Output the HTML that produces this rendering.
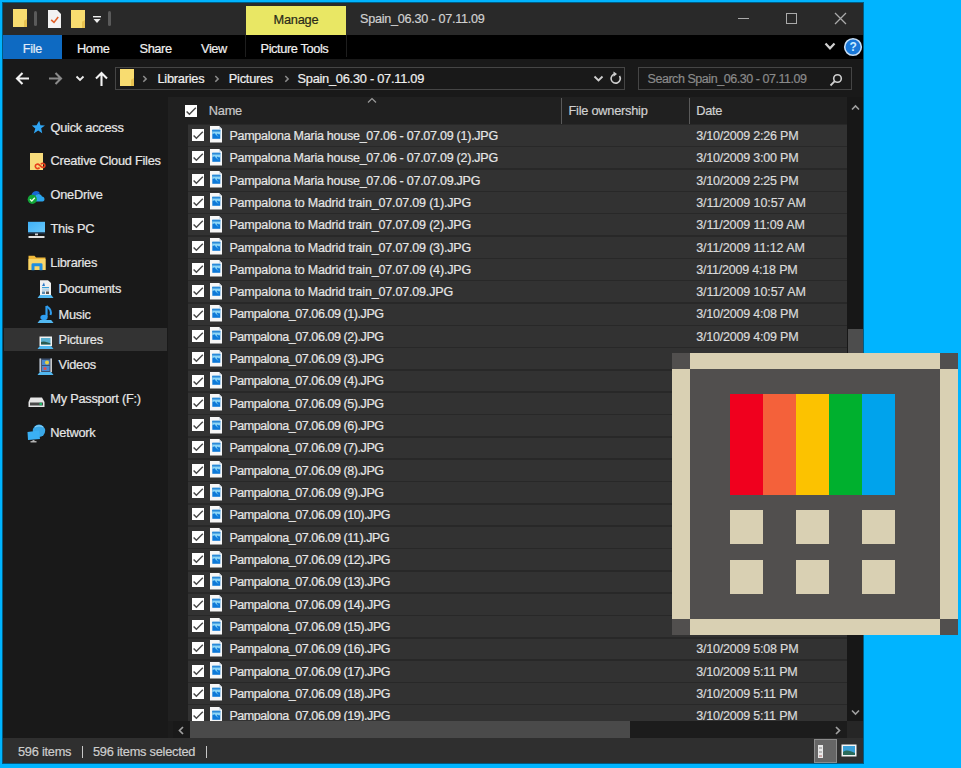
<!DOCTYPE html><html><head><meta charset='utf-8'><style>html,body{margin:0;padding:0;}
body{width:961px;height:768px;background:#00B4FF;position:relative;overflow:hidden;font-family:"Liberation Sans",sans-serif;font-size:12.5px;letter-spacing:-0.25px;color:#e3e3e3;-webkit-text-stroke:0.2px;}
.a{position:absolute;}
.t{position:absolute;white-space:pre;line-height:1;}
.win{left:3px;top:3px;width:860px;height:760px;background:#191919;box-shadow:0 0 0 1px rgba(0,20,30,0.55);}
.title{left:3px;top:3px;width:860px;height:32px;background:#292929;}
.tabs{left:3px;top:35px;width:860px;height:24px;background:#000;}
.addr{left:3px;top:59px;width:860px;height:38px;background:#191919;}
.nav{left:3px;top:97px;width:165px;height:641px;background:#191919;}
.content{left:168px;top:97px;width:695px;height:641px;background:#202020;}
.status{left:3px;top:738px;width:860px;height:25px;background:#2f2f2f;}
.rows{position:absolute;left:0;top:97px;width:847px;height:624px;overflow:hidden;}
.row{position:absolute;left:188px;width:659px;height:20.8px;background:#323232;}
.row .cb{position:absolute;left:4px;top:3.4px;width:12px;height:12px;background:#fff;}
.cb::after{content:"";position:absolute;left:2.2px;top:2.2px;width:7px;height:3.6px;border-left:2px solid #3a3a3a;border-bottom:2px solid #3a3a3a;transform:rotate(-45deg);transform-origin:center;}
.row .cb::after{left:2.0px;top:2.4px;}
.fi{position:absolute;left:21.5px;top:0.7px;width:12.5px;height:17px;background:#f4f4f4;clip-path:polygon(0 0,75% 0,100% 18%,100% 100%,0 100%);}
.fi::after{content:"";position:absolute;left:2.2px;top:4.2px;width:8.3px;height:8.5px;background:linear-gradient(#5ab8f4 0,#5ab8f4 30%,#0d78d6 30%,#0b6fcf 100%);}
.nm{position:absolute;left:41.4px;top:4.75px;white-space:pre;line-height:1;color:#e6e6e6;}
.dt{position:absolute;left:508.2px;top:4.75px;white-space:pre;line-height:1;color:#dadada;}
.nvt{position:absolute;white-space:pre;line-height:1;color:#e8e8e8;font-size:12.8px;}
.cb2{position:absolute;left:4.2px;top:3.85px;}
.fi2{position:absolute;left:21.5px;top:1.35px;}
</style></head><body><div class='a win'></div>
<div class='a title'></div>
<div class='a tabs'></div>
<div class='a addr'></div>
<div class='a nav'></div>
<div class='a content'></div>
<div class='a status'></div>
<div class='a' style='left:13px;top:9px;width:14px;height:18px;background:#f8dc70;clip-path:polygon(0 0,100% 0,100% 100%,0 100%)'></div><div class='a' style='left:23.5px;top:19px;width:3.5px;height:8px;background:#e8c250;clip-path:polygon(100% 0,100% 100%,0 100%,0 25%)'></div>
<div class='a' style='left:34px;top:11px;width:3px;height:15px;background:#5a5a5a;border-radius:1.5px'></div>
<div class='a' style='left:48px;top:10px;width:13px;height:18px;background:#f2f2f2;clip-path:polygon(0 0,70% 0,100% 22%,100% 100%,0 100%)'></div>
<svg class='a' style='left:48px;top:10px' width='13' height='18'><path d='M3.2 9.8 L6 12.4 L10.2 7' stroke='#e0602a' stroke-width='1.6' fill='none'/></svg>
<div class='a' style='left:71px;top:10px;width:14px;height:18px;background:#f8dc70;clip-path:polygon(0 0,100% 0,100% 100%,0 100%)'></div><div class='a' style='left:81.5px;top:20px;width:3.5px;height:8px;background:#e8c250;clip-path:polygon(100% 0,100% 100%,0 100%,0 25%)'></div>
<svg class='a' style='left:92px;top:15px' width='10' height='10'><rect x='1' y='1' width='8' height='1.4' fill='#eee'/><path d='M1.5 4 L8.5 4 L5 8 Z' fill='#eee'/></svg>
<div class='a' style='left:108px;top:11px;width:3px;height:15px;background:#5a5a5a;border-radius:1.5px'></div>
<div class='a' style='left:246px;top:6px;width:100px;height:29px;background:#E9E764;'></div>
<div class='t' style='left:273.50px;top:14.46px;font-size:12.8px;color:#2a2a1a;'>Manage</div>
<div class='t' style='left:360.00px;top:13.13px;font-size:12.6px;color:#d0d0d0;'>Spain_06.30 - 07.11.09</div>
<div class='a' style='left:738px;top:18px;width:11px;height:1.2px;background:#aaaaaa;'></div>
<div class='a' style='left:786px;top:13px;width:9px;height:9px;border:1.2px solid #aaaaaa'></div>
<svg class='a' style='left:834px;top:12px' width='13' height='13'><path d='M1 1 L12 12 M12 1 L1 12' stroke='#aaaaaa' stroke-width='1.3'/></svg>
<div class='a' style='left:3px;top:35px;width:59px;height:24px;background:#0e6ac2;'></div>
<div class='t' style='left:22.80px;top:42.72px;color:#e2ecf8;'>File</div>
<div class='t' style='left:77.00px;top:42.56px;font-size:12.8px;color:#f0f0f0;letter-spacing:-0.4px'>Home</div>
<div class='t' style='left:139.50px;top:42.56px;font-size:12.8px;color:#f0f0f0;letter-spacing:-0.4px'>Share</div>
<div class='t' style='left:201.00px;top:42.56px;font-size:12.8px;color:#f0f0f0;letter-spacing:-0.4px'>View</div>
<div class='a' style='left:245px;top:35px;width:1px;height:22px;background:#1e1e1e;'></div>
<div class='a' style='left:346px;top:35px;width:1px;height:22px;background:#1e1e1e;'></div>
<div class='t' style='left:260.50px;top:42.56px;font-size:12.8px;color:#f0f0f0;letter-spacing:-0.4px'>Picture Tools</div>
<svg class='a' style='left:824px;top:42px' width='12' height='9'><path d='M1.5 1.5 L6 6.3 L10.5 1.5' stroke='#d0d0d0' stroke-width='2.2' fill='none'/></svg>
<svg class='a' style='left:843px;top:37px' width='20' height='20'><circle cx='10' cy='10' r='8.3' fill='#1877d8' stroke='#c4dcf4' stroke-width='1.6'/><text x='10' y='14.3' font-family='Liberation Sans' font-size='12' font-weight='bold' fill='#c8ecff' text-anchor='middle'>?</text></svg>
<svg class='a' style='left:15px;top:71px' width='16' height='15'><path d='M14 7.5 L2 7.5 M7.5 2 L2 7.5 L7.5 13' stroke='#f2f2f2' stroke-width='2.1' fill='none'/></svg>
<svg class='a' style='left:47px;top:71px' width='16' height='15'><path d='M2 7.5 L14 7.5 M8.5 2 L14 7.5 L8.5 13' stroke='#8a8a8a' stroke-width='2.1' fill='none'/></svg>
<svg class='a' style='left:75px;top:75px' width='10' height='7'><path d='M1.5 1.5 L5 5 L8.5 1.5' stroke='#eeeeee' stroke-width='1.8' fill='none'/></svg>
<svg class='a' style='left:94px;top:71px' width='15' height='16'><path d='M7.5 15 L7.5 2 M2 7.5 L7.5 2 L13 7.5' stroke='#f2f2f2' stroke-width='2.1' fill='none'/></svg>
<div class='a' style='left:115px;top:67px;width:508px;height:21px;border:1px solid #454545'></div>
<div class='a' style='left:120px;top:69px;width:14px;height:17px;background:#f8dc70;clip-path:polygon(0 0,100% 0,100% 100%,0 100%)'></div><div class='a' style='left:130.5px;top:78px;width:3.5px;height:8px;background:#e8c250;clip-path:polygon(100% 0,100% 100%,0 100%,0 25%)'></div>
<svg class='a' style='left:141px;top:73px' width='8' height='10'><path d='M2.3 3 L5.2 5.9 L2.3 8.8' stroke='#8c8c8c' stroke-width='1.5' fill='none'/></svg>
<div class='t' style='left:157.50px;top:72.66px;font-size:12.8px;color:#efefef;'>Libraries</div>
<svg class='a' style='left:213px;top:73px' width='8' height='10'><path d='M2.3 3 L5.2 5.9 L2.3 8.8' stroke='#8c8c8c' stroke-width='1.5' fill='none'/></svg>
<div class='t' style='left:228.80px;top:72.66px;font-size:12.8px;color:#efefef;'>Pictures</div>
<svg class='a' style='left:283px;top:73px' width='8' height='10'><path d='M2.3 3 L5.2 5.9 L2.3 8.8' stroke='#8c8c8c' stroke-width='1.5' fill='none'/></svg>
<div class='t' style='left:297.50px;top:72.66px;font-size:12.8px;color:#efefef;'>Spain_06.30 - 07.11.09</div>
<svg class='a' style='left:593px;top:75px' width='11' height='8'><path d='M1.5 1.5 L5.5 5.5 L9.5 1.5' stroke='#cfcfcf' stroke-width='1.8' fill='none'/></svg>
<svg class='a' style='left:609px;top:71px' width='14' height='15'><path d='M10.5 5 A4.6 4.6 0 1 1 6 3' stroke='#cfcfcf' stroke-width='1.6' fill='none'/><path d='M4.5 0.5 L8 3 L4.5 5.8 Z' fill='#cfcfcf'/></svg>
<div class='a' style='left:638px;top:67px;width:212px;height:21px;border:1px solid #454545'></div>
<div class='t' style='left:647.50px;top:72.92px;color:#8a8a8a;letter-spacing:-0.45px'>Search Spain_06.30 - 07.11.09</div>
<svg class='a' style='left:829px;top:73px' width='14' height='14'><circle cx='8.5' cy='5.5' r='3.8' stroke='#cfcfcf' stroke-width='1.6' fill='none'/><path d='M5.8 8.2 L1.5 12.5' stroke='#cfcfcf' stroke-width='1.8'/></svg>
<div class='a' style='left:4px;top:328px;width:163px;height:23px;background:#333333;'></div>
<div class='t' style='left:50.50px;top:121.96px;font-size:12.8px;color:#e6e6e6;'>Quick access</div>
<div class='t' style='left:50.50px;top:154.66px;font-size:12.8px;color:#e6e6e6;'>Creative Cloud Files</div>
<div class='t' style='left:50.50px;top:189.16px;font-size:12.8px;color:#e6e6e6;'>OneDrive</div>
<div class='t' style='left:50.50px;top:223.06px;font-size:12.8px;color:#e6e6e6;'>This PC</div>
<div class='t' style='left:50.30px;top:257.36px;font-size:12.8px;color:#e6e6e6;'>Libraries</div>
<div class='t' style='left:58.60px;top:283.36px;font-size:12.8px;color:#e6e6e6;'>Documents</div>
<div class='t' style='left:58.60px;top:308.56px;font-size:12.8px;color:#e6e6e6;'>Music</div>
<div class='t' style='left:58.60px;top:334.16px;font-size:12.8px;color:#e6e6e6;'>Pictures</div>
<div class='t' style='left:58.60px;top:359.46px;font-size:12.8px;color:#e6e6e6;'>Videos</div>
<div class='t' style='left:50.30px;top:392.76px;font-size:12.8px;color:#e6e6e6;'>My Passport (F:)</div>
<div class='t' style='left:50.30px;top:426.66px;font-size:12.8px;color:#e6e6e6;'>Network</div>
<svg class='a' style='left:31px;top:120px' width='15' height='15'><path d='M8.2 0.8 L9.4 5.2 L14 5.6 L10.2 8.3 L11.2 13.2 L7.2 10.4 L2.8 13.4 L4.3 8.6 L0.8 5.6 L5.6 5.2 Z' fill='#2fa5f3'/></svg>
<div class='a' style='left:30px;top:153px;width:13px;height:17px;background:#f8dc7c'></div>
<svg class='a' style='left:33.5px;top:160.5px' width='12' height='9' viewBox='0 0 14 10'><path d='M6.5 7.5 C4.5 9.5,1.5 8.5,1.5 6 C1.5 3.5,4.5 2.5,6.5 4.5 L8 6 C10 8,12.8 7.5,12.8 5 C12.8 2.5,10 1.5,8 3.5' stroke='#e8401c' stroke-width='1.9' fill='none'/></svg>
<svg class='a' style='left:27px;top:188px' width='19' height='16'><path d='M4.5 12 C1.5 12,1 7.5,4.5 7 C5.5 2.5,11.5 1.5,13 5.5 C13 5.5,8 6,7.5 10 Z' fill='#1767d2'/><path d='M7 13.5 C4.5 13.5,4.5 9.5,7.5 9.5 C8.5 5,14 5,15 8.5 C18 8.5,18.5 13.5,15.5 13.5 Z' fill='#2aa4ec'/><circle cx='5.3' cy='11.3' r='4.6' fill='#13a538'/><path d='M3 11.3 L4.8 13 L7.8 9.8' stroke='#e8ffe8' stroke-width='1.3' fill='none'/></svg>
<svg class='a' style='left:28px;top:221px' width='18' height='18'><defs><linearGradient id='scr' x1='0' y1='0' x2='1' y2='1'><stop offset='0' stop-color='#3fb0f6'/><stop offset='1' stop-color='#68c8fa'/></linearGradient></defs><rect x='0' y='0.8' width='17' height='10.7' fill='url(#scr)'/><rect x='0' y='11.5' width='17' height='1.2' fill='#1a3a5a'/><rect x='7' y='12.5' width='3' height='1.8' fill='#cfcfcf'/><rect x='0.5' y='15' width='16' height='2' fill='#e0e0e0'/></svg>
<svg class='a' style='left:27.5px;top:255px' width='18' height='16'><path d='M0.5 0.8 L6.5 0.8 L8 2.5 L17.5 2.5 L17.5 15 L0.5 15 Z' fill='#f0b93a'/><rect x='0.5' y='4' width='17' height='11' fill='#f8d66a'/><path d='M3.5 15.2 L3.5 9.5 Q3.5 8.2 5 8.2 L13 8.2 Q14.5 8.2 14.5 9.5 L14.5 15.2 L11.5 15.2 L11.5 11.2 L6.5 11.2 L6.5 15.2 Z' fill='#1f8ee0'/></svg>
<svg class='a' style='left:36.5px;top:280px' width='17' height='19'><path d='M3 0.3 L11 0.3 L14 3 L14 15 L3 15 Z' fill='#f0f0f0'/><path d='M5 6 L7 2.5 L8 6 Z' fill='#2a78c8'/><rect x='5' y='7' width='7' height='1.2' fill='#3aa0d8'/><rect x='5' y='9.5' width='7' height='1' fill='#8ab8d8'/><rect x='5' y='11.5' width='3' height='2.5' fill='#5a8ab0'/><rect x='9' y='11.5' width='3' height='2.5' fill='#555'/><path d='M0.5 18 L2.8 15 L14.2 15 L16.5 18 Z' fill='#52b8f0'/></svg>
<svg class='a' style='left:36.5px;top:305px' width='17' height='19'><path d='M9.5 1 L9.5 12' stroke='#2f9ef0' stroke-width='2.2'/><path d='M9.5 1 C13 3.5,15 6,13.5 10' stroke='#2f9ef0' stroke-width='2' fill='none'/><ellipse cx='7' cy='12.5' rx='3.6' ry='2.8' fill='#2f9ef0'/><path d='M0.5 18 L2.8 15 L14.2 15 L16.5 18 Z' fill='#52b8f0'/></svg>
<svg class='a' style='left:36.5px;top:336px' width='17' height='14'><rect x='2.5' y='0.5' width='12.5' height='9.5' fill='#f2f2f2'/><rect x='4' y='2' width='9.5' height='6.5' fill='#5ab0d0'/><path d='M4 6 C7 4.5,10 6,13.5 7.5 L13.5 8.5 L4 8.5 Z' fill='#2a5a50'/><path d='M0.5 13 L2.8 10 L14.2 10 L16.5 13 Z' fill='#52b8f0'/></svg>
<svg class='a' style='left:36.5px;top:357.5px' width='17' height='17'><rect x='2.5' y='0.5' width='12.5' height='13.5' fill='#3a5070'/><rect x='2.5' y='0.5' width='1.6' height='13.5' fill='#c8c8c8'/><rect x='13.4' y='0.5' width='1.6' height='13.5' fill='#c8c8c8'/><rect x='5' y='2' width='7.5' height='5' fill='#4a8ad0'/><rect x='5' y='8' width='7.5' height='5' fill='#4a8ad0'/><circle cx='10' cy='4.5' r='2' fill='#e8d040'/><circle cx='8' cy='10.5' r='1.6' fill='#e05050'/><path d='M0.5 17 L2.8 14 L14.2 14 L16.5 17 Z' fill='#52b8f0'/></svg>
<svg class='a' style='left:28px;top:397px' width='17' height='11'><path d='M2.5 0.5 L14 0.5 L16.5 5 L16.5 10 L0.5 10 L0.5 5 Z' fill='#e6e6e6'/><rect x='2' y='5.5' width='13' height='3' fill='#4a4a4a'/><rect x='11.5' y='5.8' width='2.5' height='2.4' fill='#1fb86a'/></svg>
<svg class='a' style='left:27px;top:424px' width='19' height='19'><circle cx='12' cy='6.8' r='6.2' fill='#3aa8e8'/><path d='M8 3 C10 1.5,14 1.5,16 3' stroke='#9ad8fa' stroke-width='1' fill='none'/><path d='M0.5 8 L12 6.5 L13 15 L1 16 Z' fill='#3ab0f4'/><rect x='5.5' y='16' width='2' height='1.5' fill='#aaa'/><rect x='3.5' y='17.2' width='6' height='1.2' fill='#cfcfcf'/></svg>
<div class='a' style='left:168px;top:97px;width:679px;height:28px;background:#202020;'></div>
<svg class='a' style='left:185px;top:105px' width='12' height='12'><use href='#ck'/></svg>
<div class='t' style='left:208.80px;top:105.16px;font-size:12.8px;color:#c8c8c8;'>Name</div>
<svg class='a' style='left:367px;top:97px' width='10' height='7'><path d='M1 5.5 L5 1.5 L9 5.5' stroke='#9a9a9a' stroke-width='1.2' fill='none'/></svg>
<div class='a' style='left:561px;top:98px;width:1px;height:26px;background:#5a5a5a;'></div>
<div class='t' style='left:568.50px;top:105.16px;font-size:12.8px;color:#d0d0d0;'>File ownership</div>
<div class='a' style='left:689px;top:98px;width:1px;height:26px;background:#5a5a5a;'></div>
<div class='t' style='left:696.20px;top:105.16px;font-size:12.8px;color:#d0d0d0;'>Date</div>
<svg width='0' height='0' style='position:absolute'><defs><symbol id='ck' viewBox='0 0 12 12'><rect width='12' height='12' fill='#fff'/><path d='M1.6 6.4 L4.4 9.2 L10.8 2.8' stroke='#484848' stroke-width='1.45' fill='none'/></symbol><symbol id='pic' viewBox='0 0 13 17'><path d='M0 0 L9 0 L12 3 L12 16.4 L0 16.4 Z' fill='#f6f6f6'/><path d='M9 0 L9 3 L12 3' fill='#d8e0ea'/><rect x='2.3' y='3.8' width='8' height='9' fill='#0e79d8'/><rect x='2.3' y='3.8' width='8' height='1.6' fill='#2a8ad8'/><path d='M2.3 5.4 L10.3 5.4 L10.3 8 L9 8.6 L7.5 7.6 L6.6 9.6 L4.5 7.2 L2.3 8.2 Z' fill='#8fd6f6'/><path d='M5.5 7.5 L8 10.5' stroke='#6cc8f4' stroke-width='0.8'/></symbol></defs></svg>
<div class='a' style='left:188px;top:124px;width:659px;height:597px;background:#282828;'></div>
<div class='rows'>
<div class='row' style='top:28.15px'><svg class='cb2' width='12' height='12'><use href='#ck'/></svg><svg class='fi2' width='13' height='17'><use href='#pic'/></svg><span class='nm' style='letter-spacing:-0.25px'>Pampalona Maria house_07.06 - 07.07.09 (1).JPG</span><span class='dt' style='letter-spacing:-0.2px'>3/10/2009 2:26 PM</span></div>
<div class='row' style='top:50.47px'><svg class='cb2' width='12' height='12'><use href='#ck'/></svg><svg class='fi2' width='13' height='17'><use href='#pic'/></svg><span class='nm' style='letter-spacing:-0.25px'>Pampalona Maria house_07.06 - 07.07.09 (2).JPG</span><span class='dt' style='letter-spacing:-0.2px'>3/10/2009 3:00 PM</span></div>
<div class='row' style='top:72.79px'><svg class='cb2' width='12' height='12'><use href='#ck'/></svg><svg class='fi2' width='13' height='17'><use href='#pic'/></svg><span class='nm' style='letter-spacing:-0.25px'>Pampalona Maria house_07.06 - 07.07.09.JPG</span><span class='dt' style='letter-spacing:-0.2px'>3/10/2009 2:25 PM</span></div>
<div class='row' style='top:95.11px'><svg class='cb2' width='12' height='12'><use href='#ck'/></svg><svg class='fi2' width='13' height='17'><use href='#pic'/></svg><span class='nm' style='letter-spacing:-0.17px'>Pampalona to Madrid train_07.07.09 (1).JPG</span><span class='dt' style='letter-spacing:-0.08px'>3/11/2009 10:57 AM</span></div>
<div class='row' style='top:117.43px'><svg class='cb2' width='12' height='12'><use href='#ck'/></svg><svg class='fi2' width='13' height='17'><use href='#pic'/></svg><span class='nm' style='letter-spacing:-0.17px'>Pampalona to Madrid train_07.07.09 (2).JPG</span><span class='dt' style='letter-spacing:-0.08px'>3/11/2009 11:09 AM</span></div>
<div class='row' style='top:139.75px'><svg class='cb2' width='12' height='12'><use href='#ck'/></svg><svg class='fi2' width='13' height='17'><use href='#pic'/></svg><span class='nm' style='letter-spacing:-0.17px'>Pampalona to Madrid train_07.07.09 (3).JPG</span><span class='dt' style='letter-spacing:-0.08px'>3/11/2009 11:12 AM</span></div>
<div class='row' style='top:162.07px'><svg class='cb2' width='12' height='12'><use href='#ck'/></svg><svg class='fi2' width='13' height='17'><use href='#pic'/></svg><span class='nm' style='letter-spacing:-0.17px'>Pampalona to Madrid train_07.07.09 (4).JPG</span><span class='dt' style='letter-spacing:-0.2px'>3/11/2009 4:18 PM</span></div>
<div class='row' style='top:184.39px'><svg class='cb2' width='12' height='12'><use href='#ck'/></svg><svg class='fi2' width='13' height='17'><use href='#pic'/></svg><span class='nm' style='letter-spacing:-0.17px'>Pampalona to Madrid train_07.07.09.JPG</span><span class='dt' style='letter-spacing:-0.08px'>3/11/2009 10:57 AM</span></div>
<div class='row' style='top:206.71px'><svg class='cb2' width='12' height='12'><use href='#ck'/></svg><svg class='fi2' width='13' height='17'><use href='#pic'/></svg><span class='nm' style='letter-spacing:-0.43px'>Pampalona_07.06.09 (1).JPG</span><span class='dt' style='letter-spacing:-0.2px'>3/10/2009 4:08 PM</span></div>
<div class='row' style='top:229.03px'><svg class='cb2' width='12' height='12'><use href='#ck'/></svg><svg class='fi2' width='13' height='17'><use href='#pic'/></svg><span class='nm' style='letter-spacing:-0.43px'>Pampalona_07.06.09 (2).JPG</span><span class='dt' style='letter-spacing:-0.2px'>3/10/2009 4:09 PM</span></div>
<div class='row' style='top:251.35px'><svg class='cb2' width='12' height='12'><use href='#ck'/></svg><svg class='fi2' width='13' height='17'><use href='#pic'/></svg><span class='nm' style='letter-spacing:-0.43px'>Pampalona_07.06.09 (3).JPG</span></div>
<div class='row' style='top:273.67px'><svg class='cb2' width='12' height='12'><use href='#ck'/></svg><svg class='fi2' width='13' height='17'><use href='#pic'/></svg><span class='nm' style='letter-spacing:-0.43px'>Pampalona_07.06.09 (4).JPG</span></div>
<div class='row' style='top:295.99px'><svg class='cb2' width='12' height='12'><use href='#ck'/></svg><svg class='fi2' width='13' height='17'><use href='#pic'/></svg><span class='nm' style='letter-spacing:-0.43px'>Pampalona_07.06.09 (5).JPG</span></div>
<div class='row' style='top:318.31px'><svg class='cb2' width='12' height='12'><use href='#ck'/></svg><svg class='fi2' width='13' height='17'><use href='#pic'/></svg><span class='nm' style='letter-spacing:-0.43px'>Pampalona_07.06.09 (6).JPG</span></div>
<div class='row' style='top:340.63px'><svg class='cb2' width='12' height='12'><use href='#ck'/></svg><svg class='fi2' width='13' height='17'><use href='#pic'/></svg><span class='nm' style='letter-spacing:-0.43px'>Pampalona_07.06.09 (7).JPG</span></div>
<div class='row' style='top:362.95px'><svg class='cb2' width='12' height='12'><use href='#ck'/></svg><svg class='fi2' width='13' height='17'><use href='#pic'/></svg><span class='nm' style='letter-spacing:-0.43px'>Pampalona_07.06.09 (8).JPG</span></div>
<div class='row' style='top:385.27px'><svg class='cb2' width='12' height='12'><use href='#ck'/></svg><svg class='fi2' width='13' height='17'><use href='#pic'/></svg><span class='nm' style='letter-spacing:-0.43px'>Pampalona_07.06.09 (9).JPG</span></div>
<div class='row' style='top:407.59px'><svg class='cb2' width='12' height='12'><use href='#ck'/></svg><svg class='fi2' width='13' height='17'><use href='#pic'/></svg><span class='nm' style='letter-spacing:-0.43px'>Pampalona_07.06.09 (10).JPG</span></div>
<div class='row' style='top:429.91px'><svg class='cb2' width='12' height='12'><use href='#ck'/></svg><svg class='fi2' width='13' height='17'><use href='#pic'/></svg><span class='nm' style='letter-spacing:-0.43px'>Pampalona_07.06.09 (11).JPG</span></div>
<div class='row' style='top:452.23px'><svg class='cb2' width='12' height='12'><use href='#ck'/></svg><svg class='fi2' width='13' height='17'><use href='#pic'/></svg><span class='nm' style='letter-spacing:-0.43px'>Pampalona_07.06.09 (12).JPG</span></div>
<div class='row' style='top:474.55px'><svg class='cb2' width='12' height='12'><use href='#ck'/></svg><svg class='fi2' width='13' height='17'><use href='#pic'/></svg><span class='nm' style='letter-spacing:-0.43px'>Pampalona_07.06.09 (13).JPG</span></div>
<div class='row' style='top:496.87px'><svg class='cb2' width='12' height='12'><use href='#ck'/></svg><svg class='fi2' width='13' height='17'><use href='#pic'/></svg><span class='nm' style='letter-spacing:-0.43px'>Pampalona_07.06.09 (14).JPG</span></div>
<div class='row' style='top:519.19px'><svg class='cb2' width='12' height='12'><use href='#ck'/></svg><svg class='fi2' width='13' height='17'><use href='#pic'/></svg><span class='nm' style='letter-spacing:-0.43px'>Pampalona_07.06.09 (15).JPG</span></div>
<div class='row' style='top:541.51px'><svg class='cb2' width='12' height='12'><use href='#ck'/></svg><svg class='fi2' width='13' height='17'><use href='#pic'/></svg><span class='nm' style='letter-spacing:-0.43px'>Pampalona_07.06.09 (16).JPG</span><span class='dt' style='letter-spacing:-0.2px'>3/10/2009 5:08 PM</span></div>
<div class='row' style='top:563.83px'><svg class='cb2' width='12' height='12'><use href='#ck'/></svg><svg class='fi2' width='13' height='17'><use href='#pic'/></svg><span class='nm' style='letter-spacing:-0.43px'>Pampalona_07.06.09 (17).JPG</span><span class='dt' style='letter-spacing:-0.2px'>3/10/2009 5:11 PM</span></div>
<div class='row' style='top:586.15px'><svg class='cb2' width='12' height='12'><use href='#ck'/></svg><svg class='fi2' width='13' height='17'><use href='#pic'/></svg><span class='nm' style='letter-spacing:-0.43px'>Pampalona_07.06.09 (18).JPG</span><span class='dt' style='letter-spacing:-0.2px'>3/10/2009 5:11 PM</span></div>
<div class='row' style='top:608.47px'><svg class='cb2' width='12' height='12'><use href='#ck'/></svg><svg class='fi2' width='13' height='17'><use href='#pic'/></svg><span class='nm' style='letter-spacing:-0.43px'>Pampalona_07.06.09 (19).JPG</span><span class='dt' style='letter-spacing:-0.2px'>3/10/2009 5:11 PM</span></div>
</div>
<div class='a' style='left:847px;top:97px;width:16px;height:624px;background:#171717;'></div>
<svg class='a' style='left:851px;top:103.5px' width='9' height='7'><path d='M1 5.5 L4.5 2 L8 5.5' stroke='#a0a0a0' stroke-width='1.6' fill='none'/></svg>
<div class='a' style='left:848px;top:329px;width:15px;height:30px;background:#4d4d4d;'></div>
<svg class='a' style='left:851px;top:709px' width='9' height='7'><path d='M1 1.5 L4.5 5 L8 1.5' stroke='#a0a0a0' stroke-width='1.6' fill='none'/></svg>
<div class='a' style='left:168px;top:721px;width:695px;height:17px;background:#1c1c1c;'></div>
<div class='a' style='left:173px;top:721px;width:17px;height:17px;background:#191919;'></div>
<div class='a' style='left:190px;top:721px;width:440px;height:17px;background:#4a4a4a;'></div>
<svg class='a' style='left:177px;top:726px' width='8' height='9'><path d='M6 1 L2.5 4.5 L6 8' stroke='#a0a0a0' stroke-width='1.7' fill='none'/></svg>
<svg class='a' style='left:834px;top:726px' width='8' height='9'><path d='M2 1 L5.5 4.5 L2 8' stroke='#a0a0a0' stroke-width='1.7' fill='none'/></svg>
<div class='a' style='left:847px;top:721px;width:16px;height:17px;background:#262626;'></div>
<div class='t' style='left:18.00px;top:745.76px;font-size:12.8px;color:#cdcdcd;'>596 items</div>
<div class='a' style='left:82px;top:746px;width:1.2px;height:12px;background:#c8c8c8;'></div>
<div class='t' style='left:93.00px;top:745.76px;font-size:12.8px;color:#cdcdcd;'>596 items selected</div>
<div class='a' style='left:206px;top:746px;width:1.2px;height:12px;background:#c8c8c8;'></div>
<div class='a' style='left:814px;top:739px;width:23px;height:24px;background:#666666;border:1px solid #8c8c8c;box-sizing:border-box'></div>
<div class='a' style='left:818px;top:745px;width:5px;height:13px;background:#e8e8e8;'></div>
<div class='a' style='left:819px;top:746.5px;width:3px;height:2.5px;background:#b8b8b8;'></div>
<div class='a' style='left:819px;top:750.5px;width:3px;height:2.5px;background:#b8b8b8;'></div>
<div class='a' style='left:819px;top:754.5px;width:3px;height:2.5px;background:#c8a8a8;'></div>
<svg class='a' style='left:841px;top:744px' width='16' height='13'><rect x='0.5' y='0.5' width='15' height='12' fill='#f4f4f4'/><rect x='2' y='2' width='12' height='9' fill='#3aa0d8'/><path d='M2 8 C6 5,9 7,14 9 L14 11 L2 11 Z' fill='#2a6a5a'/></svg>
<div class='a' style='left:672px;top:353px;width:286px;height:282px;background:#514f4e;'></div>
<div class='a' style='left:690px;top:353px;width:250px;height:16px;background:#d9d0b3;'></div>
<div class='a' style='left:690px;top:619px;width:250px;height:16px;background:#d9d0b3;'></div>
<div class='a' style='left:672px;top:369px;width:18px;height:250px;background:#d9d0b3;'></div>
<div class='a' style='left:940px;top:369px;width:18px;height:250px;background:#d9d0b3;'></div>
<div class='a' style='left:729.8px;top:393.8px;width:33.2px;height:100.8px;background:#f0001e;'></div>
<div class='a' style='left:762.9px;top:393.8px;width:33.2px;height:100.8px;background:#f4613a;'></div>
<div class='a' style='left:796.0px;top:393.8px;width:33.2px;height:100.8px;background:#fcc200;'></div>
<div class='a' style='left:829.1px;top:393.8px;width:33.2px;height:100.8px;background:#00b02e;'></div>
<div class='a' style='left:862.2px;top:393.8px;width:33.2px;height:100.8px;background:#00a3ec;'></div>
<div class='a' style='left:729.8px;top:510.4px;width:33.3px;height:33.6px;background:#d9d0b3;'></div>
<div class='a' style='left:796.0px;top:510.4px;width:33.3px;height:33.6px;background:#d9d0b3;'></div>
<div class='a' style='left:862.2px;top:510.4px;width:33.3px;height:33.6px;background:#d9d0b3;'></div>
<div class='a' style='left:729.8px;top:560.2px;width:33.3px;height:33.6px;background:#d9d0b3;'></div>
<div class='a' style='left:796.0px;top:560.2px;width:33.3px;height:33.6px;background:#d9d0b3;'></div>
<div class='a' style='left:862.2px;top:560.2px;width:33.3px;height:33.6px;background:#d9d0b3;'></div></body></html>
